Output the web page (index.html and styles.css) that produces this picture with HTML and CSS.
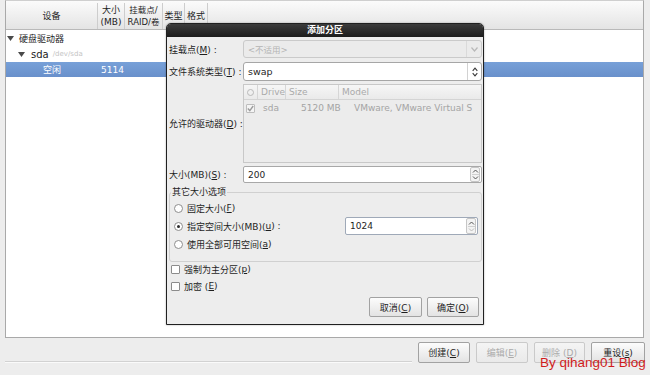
FILE: index.html
```html
<!DOCTYPE html>
<html lang="zh-CN">
<head>
<meta charset="utf-8">
<title>添加分区</title>
<link rel="stylesheet" href="styles.css">
</head>
<body>
<div class="screen">
  <div class="tree">
    <div class="thead">
      <div class="th c-dev">设备</div>
      <div class="th c-size">大小<br>(MB)</div>
      <div class="th c-mnt">挂载点/<br>RAID/卷</div>
      <div class="th c-type">类型</div>
      <div class="th c-fmt">格式</div>
      <div class="th c-rest"></div>
    </div>
    <div class="trow lvl0"><svg class="exp" width="7" height="5" viewBox="0 0 7 5"><path d="M0 0H7L3.5 5Z" fill="#4a4a4a"/></svg><span>硬盘驱动器</span></div>
    <div class="trow lvl1"><svg class="exp" width="7" height="5" viewBox="0 0 7 5"><path d="M0 0H7L3.5 5Z" fill="#4a4a4a"/></svg><span class="dev">sda</span><span class="path">/dev/sda</span></div>
    <div class="trow lvl2 sel"><span class="nm">空闲</span><span>5114</span></div>
  </div>
  <div class="actions">
    <div class="sep"></div>
    <button class="btn b1">创建(<u>C</u>)</button>
    <button class="btn b2 dis">编辑(<u>E</u>)</button>
    <button class="btn b3 dis">删除 (<u>D</u>)</button>
    <button class="btn b4">重设(<u>s</u>)</button>
  </div>
</div>

<div class="dialog">
  <div class="dlg-title">添加分区</div>
  <div class="dlg-body">
    <div class="frow r-mount">
      <label>挂载点(<u>M</u>) :</label>
      <div class="combo dis"><span class="val">&lt;不适用&gt;</span><span class="cbtn"><svg width="7" height="5" viewBox="0 0 7 5"><path d="M0.5 0.5L3.5 4L6.5 0.5" fill="none" stroke="#b8b8b8" stroke-width="1.2"/></svg></span></div>
    </div>
    <div class="frow r-fs">
      <label>文件系统类型(<u>T</u>) :</label>
      <div class="combo"><span class="val">swap</span><span class="cbtn"><svg width="6" height="10" viewBox="0 0 6 10"><path d="M0.7 3.8L3 1.2L5.3 3.8M0.7 6.2L3 8.8L5.3 6.2" fill="none" stroke="#3a3a3a" stroke-width="1.1"/></svg></span></div>
    </div>
    <div class="frow r-drv">
      <label>允许的驱动器(<u>D</u>) :</label>
      <div class="dlist">
        <div class="dl-head">
          <span class="h0"><i class="hcirc"></i></span>
          <span class="h1">Drive</span>
          <span class="h2">Size</span>
          <span class="h3">Model</span>
        </div>
        <div class="dl-row">
          <span class="cbox on dimbox"><svg width="7" height="7" viewBox="0 0 7 7"><path d="M0.8 3.6L2.8 5.6L6.2 1" fill="none" stroke="#9c9c9c" stroke-width="1.4"/></svg></span>
          <span class="d1">sda</span>
          <span class="d2">5120 MB</span>
          <span class="d3">VMware, VMware Virtual S</span>
        </div>
      </div>
    </div>
    <div class="frow r-size">
      <label>大小(MB)(<u>S</u>) :</label>
      <div class="spin"><span class="val">200</span><span class="sbtn"><svg width="7" height="13" viewBox="0 0 7 13"><path d="M1 4.5L3.5 2L6 4.5M1 8.5L3.5 11L6 8.5" fill="none" stroke="#555" stroke-width="1"/><path d="M0 6.5H7" stroke="#d0d0d0" stroke-width="1"/></svg></span></div>
    </div>
    <fieldset class="opts">
      <legend>其它大小选项</legend>
      <div class="opt"><span class="radio"></span>固定大小(<u>F</u>)</div>
      <div class="opt"><span class="radio on"></span>指定空间大小(MB)(<u>u</u>) :
        <div class="spin s2"><span class="val">1024</span><span class="sbtn"><svg width="7" height="13" viewBox="0 0 7 13"><path d="M1 4.5L3.5 2L6 4.5" fill="none" stroke="#555" stroke-width="1"/><path d="M1 8.5L3.5 11L6 8.5" fill="none" stroke="#bbb" stroke-width="1"/><path d="M0 6.5H7" stroke="#d0d0d0" stroke-width="1"/></svg></span></div>
      </div>
      <div class="opt"><span class="radio"></span>使用全部可用空间(<u>a</u>)</div>
    </fieldset>
    <div class="chk"><span class="cbox"></span>强制为主分区(<u>p</u>)</div>
    <div class="chk chk2"><span class="cbox"></span>加密 (<u>E</u>)</div>
    <div class="dlg-btns">
      <button class="btn db1">取消(<u>C</u>)</button>
      <button class="btn db2">确定(<u>O</u>)</button>
    </div>
  </div>
</div>

<div class="watermark">By qihang01 Blog</div>
</body>
</html>
```

FILE: styles.css
```css
* { box-sizing: border-box; }
html, body { margin: 0; padding: 0; }
body {
  width: 650px;
  height: 375px;
  overflow: hidden;
  position: relative;
  background: #ededed;
  font-family: "DejaVu Sans", "Noto Sans CJK SC", sans-serif;
  font-size: 9px;
  color: #1e1e1e;
}
u { text-decoration: underline; text-underline-offset: 1px; }

.screen { display: flex; flex-direction: column; height: 375px; }

/* tree view */
.tree {
  height: 338px;
  margin: 0 6px 0 5px;
  background: #fff;
  border: 1px solid #a9a9a9;
  border-top-color: #cfcfcf;
}
.thead {
  display: flex;
  height: 29px;
  padding-top: 2px;
  background: linear-gradient(#fbfbfb, #e4e4e4);
  border-bottom: 1px solid #b9b9b9;
}
.th {
  display: flex;
  align-items: center;
  justify-content: center;
  text-align: center;
  line-height: 12px;
  border-right: 1px solid #cdcdcd;
  white-space: nowrap;
  flex: none;
}
.c-dev { width: 92px; }
.c-size { width: 27px; }
.c-mnt { width: 38px; font-size: 8.5px; }
.c-type { width: 22px; }
.c-fmt { width: 23px; }
.c-rest { flex: 1; border-right: none; }

.trow {
  height: 16px;
  display: flex;
  align-items: center;
  white-space: nowrap;
}
.lvl0 { padding-left: 1px; }
.lvl0 .exp { margin-right: 5px; }
.lvl1 { padding-left: 12px; }
.lvl1 .exp { margin-right: 6px; }
.dev { font-size: 10px; color: #222; }
.path { font-size: 7px; color: #c4c4c4; margin-left: 4px; }
.sel {
  height: 15px;
  background: linear-gradient(#77a0d8, #6990cb);
  color: #fff;
  padding-left: 37px;
}
.sel .nm { width: 58px; }

/* bottom action bar */
.actions {
  flex: 1;
  display: flex;
  align-items: flex-start;
  padding: 4px 5px 0 5px;
  gap: 6px;
}
.sep {
  flex: 1;
  margin-top: 19px;
  height: 2px;
  border-top: 1px solid #d2d2d2;
  border-bottom: 1px solid #fafafa;
}
.btn {
  height: 21px;
  padding: 0;
  border: 1px solid #a2a2a2;
  border-radius: 2px;
  background: linear-gradient(#fcfcfc, #e3e3e3);
  font: inherit;
  color: #1e1e1e;
  flex: none;
}
.btn.dis {
  color: #ababab;
  border-color: #cacaca;
  background: linear-gradient(#f4f4f4, #eaeaea);
}
.b1 { width: 52px; }
.b2 { width: 52px; }
.b3 { width: 51px; }
.b4 { width: 54px; }

/* dialog */
.dialog {
  position: absolute;
  left: 166px;
  top: 23px;
  width: 318px;
  height: 302px;
  border: 1px solid #202020;
  border-radius: 5px 5px 0 0;
  background: #ededed;
  box-shadow: 0 0 2px rgba(0, 0, 0, 0.35);
  display: flex;
  flex-direction: column;
}
.dlg-title {
  height: 13px;
  line-height: 13px;
  text-align: center;
  color: #fff;
  font-weight: bold;
  background: linear-gradient(#3c3c3c, #1c1c1c);
  border-radius: 4px 4px 0 0;
  flex: none;
}
.dlg-body {
  flex: 1;
  display: flex;
  flex-direction: column;
  padding: 3px 1px 0 2px;
}
.frow { display: flex; align-items: center; flex: none; }
.frow > label { width: 74px; flex: none; white-space: nowrap; }
.r-mount { height: 18px; }
.r-fs { height: 19px; margin-top: 4px; }
.r-drv { height: 79px; margin-top: 3px; }
.r-size { height: 17px; margin-top: 3px; }

.combo {
  flex: 1;
  height: 100%;
  display: flex;
  align-items: center;
  background: #fff;
  border: 1px solid #a6a6a6;
  border-radius: 3px;
}
.combo .val { flex: 1; padding-left: 4px; font-size: 9.5px; }
.cbtn {
  width: 14px;
  height: 100%;
  display: flex;
  align-items: center;
  justify-content: center;
  border-left: 1px solid #d2d2d2;
}
.combo.dis { background: #ebebeb; border-color: #cacaca; color: #b4b4b4; }
.combo.dis .val { font-size: 8.5px; }
.combo.dis .cbtn { border-left-color: #dadada; width: 15px; }

.dlist {
  flex: 1;
  height: 100%;
  display: flex;
  flex-direction: column;
  background: #ececec;
  border: 1px solid #c8c8c8;
}
.dl-head {
  display: flex;
  height: 15px;
  background: linear-gradient(#f6f6f6, #eaeaea);
  border-bottom: 1px solid #d4d4d4;
  color: #aaaaaa;
}
.dl-head > span {
  display: flex;
  align-items: center;
  padding-left: 3px;
  border-right: 1px solid #d6d6d6;
  flex: none;
}
.h0 { width: 14px; }
.h1 { width: 28px; }
.h2 { width: 53px; }
.h3 { flex: 1 !important; border-right: none !important; }
.hcirc {
  display: block;
  width: 7px;
  height: 7px;
  border: 1px solid #b9b9b9;
  border-radius: 50%;
}
.dl-row {
  display: flex;
  align-items: center;
  height: 16px;
  padding-left: 2px;
  color: #a4a4a4;
}
.dl-row .cbox { margin-right: 8px; }
.d1 { width: 38px; }
.d2 { width: 53px; }

.cbox {
  width: 9px;
  height: 9px;
  flex: none;
  display: flex;
  align-items: center;
  justify-content: center;
  background: #fff;
  border: 1px solid #8c8c8c;
  border-radius: 1px;
}
.cbox.dimbox { border-color: #bdbdbd; background: #f4f4f4; }

.spin {
  flex: 1;
  height: 100%;
  display: flex;
  align-items: center;
  background: #fff;
  border: 1px solid #a8a8a8;
  border-radius: 2px;
}
.spin .val { flex: 1; padding-left: 4px; }
.sbtn {
  width: 10px;
  height: 15px;
  margin-right: 1px;
  display: flex;
  align-items: center;
  justify-content: center;
  border: 1px solid #c6c6c6;
  border-radius: 2px;
  background: #f3f3f3;
}

.opts {
  margin: 4px 0 0 0;
  padding: 1px 0 8px 0;
  border: 1px solid #d0d0d0;
  border-radius: 3px;
  min-width: 0;
  flex: none;
}
.opts legend {
  padding: 0 1px;
  margin-left: 1px;
  height: 11px;
  line-height: 11px;
}
.opt {
  height: 18px;
  display: flex;
  align-items: center;
  padding-left: 4px;
  white-space: nowrap;
}
.radio {
  width: 9px;
  height: 9px;
  flex: none;
  margin-right: 4px;
  border: 1px solid #8e8e8e;
  border-radius: 50%;
  background: #fff;
  display: flex;
  align-items: center;
  justify-content: center;
}
.radio.on::after {
  content: "";
  width: 3px;
  height: 3px;
  border-radius: 50%;
  background: #2a2a2a;
}
.spin.s2 {
  flex: none;
  width: 133px;
  height: 18px;
  margin-left: auto;
  margin-right: 3px;
  border-color: #9fa9b8;
}
.spin.s2 .sbtn { height: 16px; }

.chk {
  height: 14px;
  display: flex;
  align-items: center;
  padding-left: 2px;
  flex: none;
}
.chk .cbox { margin-right: 4px; }
.chk2 { margin-top: 3px; }

.dlg-btns {
  display: flex;
  justify-content: flex-end;
  gap: 5px;
  margin-top: 4px;
  padding-right: 3px;
  flex: none;
}
.dlg-btns .btn { height: 20px; }
.db1 { width: 53px; }
.db2 { width: 52px; }

.watermark {
  position: absolute;
  left: 540px;
  top: 355px;
  font-family: "Liberation Sans", Arial, sans-serif;
  font-size: 13.5px;
  line-height: 16px;
  color: #d01c1c;
  white-space: nowrap;
}
```
